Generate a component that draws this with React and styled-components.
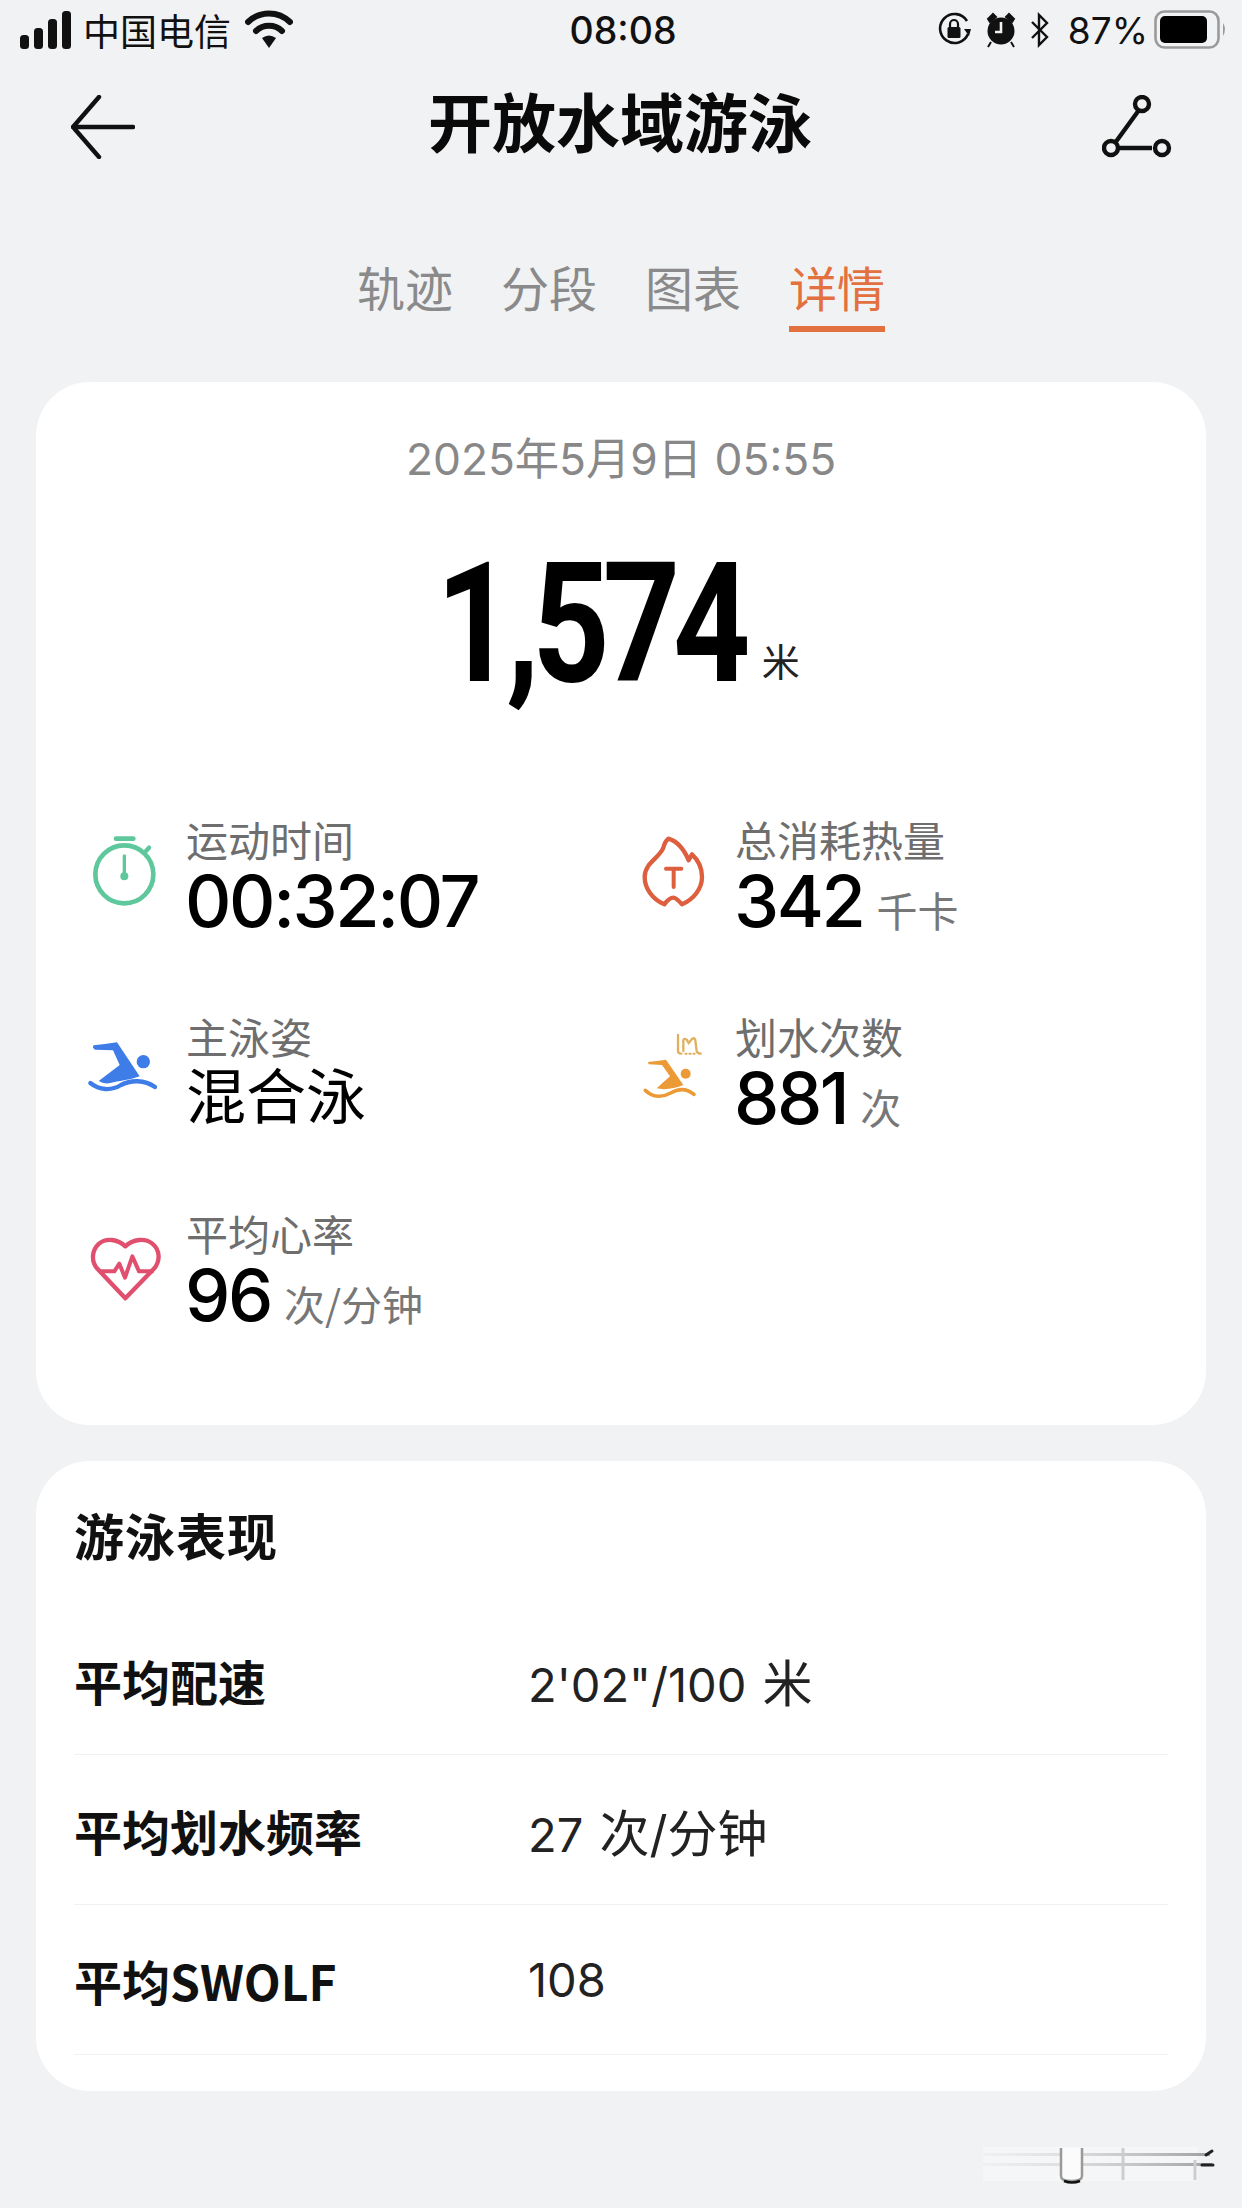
import React from 'react';
import styled, { createGlobalStyle } from 'styled-components';

const CJK = '"Noto Sans CJK SC", "Noto Sans", sans-serif';
const NUM = 'Inter, "Noto Sans CJK SC", sans-serif';

const Global = createGlobalStyle`
  html, body { margin: 0; padding: 0; background: #f1f2f4; }
  body { font-family: ${CJK}; color: #000; }
`;

const Page = styled.div`
  position: relative;
  width: 1242px;
  height: 2208px;
  overflow: hidden;
  background: #f1f2f4;
`;

const StatusBar = styled.div`
  display: grid;
  grid-template-columns: 1fr auto 1fr;
  align-items: center;
  height: 60px;
  padding: 0 14px 0 20px;
  box-sizing: border-box;
`;
const StatusLeft = styled.div`
  display: flex;
  align-items: center;
  gap: 12px;
`;
const StatusRight = styled.div`
  display: flex;
  align-items: center;
  justify-content: flex-end;
  gap: 14px;
`;
const Carrier = styled.span`
  font-size: 37px;
  line-height: 60px;
  color: #111;
  margin: 0 2px 0 -1px;
`;
const Clock = styled.span`
  font-family: ${NUM};
  font-size: 37.5px;
  font-weight: 500;
  color: #111;
  margin-left: -2px;
`;
const Battery = styled.span`
  font-family: ${NUM};
  font-size: 37px;
  color: #111;
  margin: 0 -8px 0 4px;
`;

const Header = styled.div`
  display: flex;
  align-items: center;
  justify-content: space-between;
  height: 124px;
  padding: 0 70px 0 71px;
`;
const HeaderIcon = styled.svg`
  margin-top: 10px;
  flex: none;
`;
const Title = styled.h1`
  margin: -6px 0 0 3px;
  font-size: 64px;
  font-weight: 700;
  line-height: 124px;
  color: #0a0a0a;
`;

const Tabs = styled.div`
  display: flex;
  justify-content: center;
  gap: 48px;
  padding-top: 77px;
  margin-bottom: 50px;
`;
const Tab = styled.div`
  font-size: 48px;
  line-height: 50px;
  padding-bottom: 15px;
  color: ${p => (p.$active ? '#e3703f' : '#8a8a8a')};
  border-bottom: 6px solid ${p => (p.$active ? '#e3703f' : 'transparent')};
`;

const Card = styled.section`
  margin: 0 36px 36px 36px;
  background: #fff;
  border-radius: 54px;
`;
const SummaryCard = styled(Card)`
  height: 1043px;
  padding-top: 49px;
  box-sizing: border-box;
`;
const DateLine = styled.div`
  text-align: center;
  font-family: ${NUM};
  font-size: 44.3px;
  line-height: 56px;
  color: #888;
`;
const Hero = styled.div`
  display: flex;
  justify-content: center;
  align-items: baseline;
  gap: 14px;
  height: 304px;
  line-height: 274px;
`;
const HeroNumber = styled.span`
  display: inline-block;
  font-family: Roboto, sans-serif;
  font-weight: 700;
  font-size: 167px;
  letter-spacing: -9px;
  margin: 0 -32px 0 -42px;
  transform: scaleX(0.81);
  color: #000;
`;
const HeroUnit = styled.span`
  font-size: 38px;
  color: #222;
  transform: translateY(-5px);
`;

const StatGrid = styled.div`
  display: grid;
  grid-template-columns: 549px 1fr;
  grid-auto-rows: 197px;
  padding-left: 25px;
`;
const Stat = styled.div`
  display: flex;
  gap: 5px;
`;
const IconBox = styled.svg`
  width: 120px;
  height: 120px;
  flex: none;
`;
const StatText = styled.div`
  padding-top: 23px;
`;
const StatLabel = styled.div`
  font-size: 42px;
  line-height: 50px;
  margin-bottom: 3px;
  color: #6e6e6e;
`;
const StatValue = styled.div`
  display: flex;
  align-items: baseline;
  gap: 13px;
  line-height: 70px;
`;
const Big = styled.span`
  font-family: ${NUM};
  font-weight: 500;
  font-size: 72px;
  letter-spacing: -2.4px;
  margin: -1px 0 0 -1px;
  color: #000;
`;
const BigCjk = styled.span`
  font-size: 60px;
  font-weight: 400;
  color: #000;
  margin-top: -6px;
`;
const Unit = styled.span`
  font-size: 41px;
  color: #777;
`;

const PerfCard = styled(Card)`
  height: 630px;
  padding: 43px 38px 0 38px;
  box-sizing: border-box;
`;
const PerfTitle = styled.h2`
  margin: 0 0 41px;
  font-size: 50px;
  letter-spacing: 1px;
  font-weight: 700;
  line-height: 60px;
  color: #111;
`;
const PerfRow = styled.div`
  display: flex;
  align-items: center;
  height: 149px;
  border-bottom: 1px solid #f1f1f1;
`;
const PerfLabel = styled.div`
  width: 454px;
  font-size: 48px;
  font-weight: 700;
  color: #111;
`;
const PerfValue = styled.div`
  font-family: ${NUM};
  font-size: 47px;
  color: #222;
`;
const PerfUnit = styled.span`
  font-size: 50px;
  margin-left: 3px;
`;
const Watermark = styled.svg`
  position: absolute;
  left: 980px;
  top: 2140px;
  width: 240px;
  height: 50px;
`;

const Signal = () => (
  <svg width="52" height="38" viewBox="0 0 52 38">
    <rect x="0" y="24" width="9" height="14" rx="3.5" fill="#111" />
    <rect x="14" y="17" width="9" height="21" rx="3.5" fill="#111" />
    <rect x="28" y="8" width="9" height="30" rx="3.5" fill="#111" />
    <rect x="42" y="0" width="9" height="38" rx="3.5" fill="#111" />
  </svg>
);
const Wifi = () => (
  <svg width="48" height="40" viewBox="0 0 48 40">
    <path d="M3 12 A30 30 0 0 1 45 12" fill="none" stroke="#111" strokeWidth="6" strokeLinecap="round" />
    <path d="M11 21 A19 19 0 0 1 37 21" fill="none" stroke="#111" strokeWidth="6" strokeLinecap="round" />
    <path d="M17 28 Q24 23 31 28 L24 38 Z" fill="#111" />
  </svg>
);
const RotLock = () => (
  <svg width="34" height="36" viewBox="0 0 34 36">
    <path d="M30 22 A14.5 14.5 0 1 1 29 9" fill="none" stroke="#111" strokeWidth="2.6" />
    <path d="M33 17 L26 17 L31 24 Z" fill="#111" />
    <rect x="9.5" y="15" width="13" height="11" rx="1.5" fill="#111" />
    <path d="M12 15 V12 A4 4 0 0 1 20 12 V15" fill="none" stroke="#111" strokeWidth="2.2" />
  </svg>
);
const Alarm = () => (
  <svg width="30" height="36" viewBox="0 0 30 36">
    <circle cx="15" cy="19" r="13.5" fill="#111" />
    <path d="M2 7 L7 2 L10 5 L4 10 Z M28 7 L23 2 L20 5 L26 10 Z M5 30 L2 35 M25 30 L28 35" fill="#111" stroke="#111" strokeWidth="2" />
    <path d="M15 10 V20 H9" fill="none" stroke="#f1f2f4" strokeWidth="2.6" />
  </svg>
);
const Bluetooth = () => (
  <svg width="20" height="36" viewBox="0 0 20 36">
    <path d="M2 10 L17 25 L9 33 V3 L17 11 L2 26" fill="none" stroke="#111" strokeWidth="2.4" />
  </svg>
);
const BatteryIcon = () => (
  <svg width="74" height="40" viewBox="0 0 74 40">
    <rect x="1.5" y="1.5" width="63" height="36" rx="9" fill="none" stroke="#9a9a9a" strokeWidth="2.6" />
    <rect x="6" y="6" width="47" height="27" rx="5" fill="#000" />
    <path d="M69 13 Q73 19 69 26 Z" fill="#9a9a9a" />
  </svg>
);
const BackArrow = () => (
  <HeaderIcon width="64" height="64" viewBox="0 0 64 64">
    <path d="M28 2 L2 32 L28 62 M2 32 H62" fill="none" stroke="#111" strokeWidth="4.4" strokeLinecap="round" strokeLinejoin="round" />
  </HeaderIcon>
);
const RouteIcon = () => (
  <HeaderIcon width="70" height="64" viewBox="0 0 70 64">
    <path d="M37 15 L13 48 M17 53 H50" fill="none" stroke="#111" strokeWidth="4.4" />
    <circle cx="40" cy="9" r="7" fill="none" stroke="#111" strokeWidth="4.4" />
    <circle cx="9" cy="53" r="7" fill="none" stroke="#111" strokeWidth="4.4" />
    <circle cx="60" cy="53" r="7" fill="none" stroke="#111" strokeWidth="4.4" />
  </HeaderIcon>
);

const Stopwatch = () => (
  <IconBox viewBox="3 0 360 360">
    <circle cx="193" cy="250" r="87" fill="none" stroke="#5fc79c" strokeWidth="14" />
    <path d="M168 143 H220" stroke="#5fc79c" strokeWidth="14" strokeLinecap="round" />
    <path d="M253 185 L267 170" stroke="#5fc79c" strokeWidth="13" strokeLinecap="round" />
    <path d="M193 195 V255" stroke="#5fc79c" strokeWidth="10" strokeLinecap="round" />
    <circle cx="193" cy="256" r="12" fill="#5fc79c" />
  </IconBox>
);
const Flame = () => (
  <IconBox viewBox="0 -30 360 360">
    <path
      d="M175 113 C200 120 222 145 236 178 C240 170 243 165 246 160 C268 180 276 205 276 228 C276 262 252 295 216 310 C205 298 198 290 190 290 C180 290 172 298 163 310 C127 295 104 262 104 228 C104 185 150 170 160 140 C163 128 168 118 175 113 Z"
      fill="none" stroke="#dd5f3f" strokeWidth="13" strokeLinejoin="round"
    />
    <path d="M168 203 H214 M191 203 V258" fill="none" stroke="#dd5f3f" strokeWidth="12" strokeLinecap="round" />
  </IconBox>
);
const Swim = () => (
  <IconBox viewBox="0 -39 360 360">
    <path d="M98 133 Q130 130 168 124 L236 226 C205 238 172 240 148 246 Q128 250 113 240 L176 192 L156 148 L102 146 Q92 140 98 133 Z" fill="#3e7de8" />
    <circle cx="247" cy="182" r="20" fill="#3e7de8" />
    <path d="M88 246 C115 268 150 270 180 252 C210 236 250 236 282 258" fill="none" stroke="#3e7de8" strokeWidth="13" strokeLinecap="round" />
  </IconBox>
);
const Strokes = () => (
  <IconBox viewBox="-30 -39 360 360">
    <path d="M84 183 Q110 180 138 176 L190 252 C165 262 135 268 110 262 L150 226 L126 192 L86 190 Z" fill="#ec9a35" />
    <circle cx="197" cy="218" r="15" fill="#ec9a35" />
    <path d="M76 268 C100 292 130 288 152 276 C175 262 200 262 222 280" fill="none" stroke="#ec9a35" strokeWidth="11" strokeLinecap="round" />
    <path d="M174 102 V150 Q174 158 184 158 M190 150 V118 Q192 110 200 116 L206 126 L216 114 Q224 108 226 118 L230 150 Q232 158 242 158" fill="none" stroke="#e0b060" strokeWidth="7" strokeLinecap="round" />
    <path d="M196 158 H200 M208 158 H212 M220 158 H224" stroke="#e0b060" strokeWidth="6" strokeLinecap="round" />
  </IconBox>
);
const Heart = () => (
  <IconBox viewBox="-30 -78 360 360">
    <path
      d="M163 262 L78 172 C60 150 62 118 84 98 C106 80 140 84 163 106 C186 84 222 80 244 98 C268 118 268 150 250 172 Z"
      fill="none" stroke="#e0506e" strokeWidth="13" strokeLinejoin="round"
    />
    <path d="M84 181 H130 L145 158 L162 200 L184 136 L204 181 H248" fill="none" stroke="#e0506e" strokeWidth="12" strokeLinejoin="round" />
  </IconBox>
);

const tabs = ['轨迹', '分段', '图表', '详情'];
const perf = [
  ['平均配速', '2\'02"/100', '米'],
  ['平均划水频率', '27', '次/分钟'],
  ['平均SWOLF', '108', ''],
];

export default function App() {
  return (
    <Page>
      <Global />
      <StatusBar>
        <StatusLeft>
          <Signal />
          <Carrier>中国电信</Carrier>
          <Wifi />
        </StatusLeft>
        <Clock>08:08</Clock>
        <StatusRight>
          <RotLock />
          <Alarm />
          <Bluetooth />
          <Battery>87%</Battery>
          <BatteryIcon />
        </StatusRight>
      </StatusBar>
      <Header>
        <BackArrow />
        <Title>开放水域游泳</Title>
        <RouteIcon />
      </Header>
      <Tabs>
        {tabs.map((t, i) => (
          <Tab key={t} $active={i === 3}>{t}</Tab>
        ))}
      </Tabs>
      <SummaryCard>
        <DateLine>2025年5月9日 05:55</DateLine>
        <Hero>
          <HeroNumber>1,574</HeroNumber>
          <HeroUnit>米</HeroUnit>
        </Hero>
        <StatGrid>
          <Stat>
            <Stopwatch />
            <StatText>
              <StatLabel>运动时间</StatLabel>
              <StatValue><Big>00:32:07</Big></StatValue>
            </StatText>
          </Stat>
          <Stat>
            <Flame />
            <StatText>
              <StatLabel>总消耗热量</StatLabel>
              <StatValue><Big>342</Big><Unit>千卡</Unit></StatValue>
            </StatText>
          </Stat>
          <Stat>
            <Swim />
            <StatText>
              <StatLabel>主泳姿</StatLabel>
              <StatValue><BigCjk>混合泳</BigCjk></StatValue>
            </StatText>
          </Stat>
          <Stat>
            <Strokes />
            <StatText>
              <StatLabel>划水次数</StatLabel>
              <StatValue><Big>881</Big><Unit>次</Unit></StatValue>
            </StatText>
          </Stat>
          <Stat>
            <Heart />
            <StatText>
              <StatLabel>平均心率</StatLabel>
              <StatValue><Big>96</Big><Unit>次/分钟</Unit></StatValue>
            </StatText>
          </Stat>
        </StatGrid>
      </SummaryCard>
      <PerfCard>
        <PerfTitle>游泳表现</PerfTitle>
        {perf.map(([k, v, u]) => (
          <PerfRow key={k}>
            <PerfLabel>{k}</PerfLabel>
            <PerfValue>{v} {u && <PerfUnit>{u}</PerfUnit>}</PerfValue>
          </PerfRow>
        ))}
      </PerfCard>
      <Watermark viewBox="0 0 240 50">
        <defs>
          <linearGradient id="fade" x1="0" x2="1" y1="0" y2="0">
            <stop offset="0" stopColor="#d8d9db" stopOpacity="0.2" />
            <stop offset="1" stopColor="#a0a0a0" />
          </linearGradient>
        </defs>
        <rect x="3" y="7" width="215" height="34" fill="#fff" opacity="0.3" />
        <rect x="3" y="13" width="227" height="3" fill="url(#fade)" />
        <rect x="3" y="23" width="229" height="3" fill="url(#fade)" />
        <path d="M226 15 L232 11 M222 25 H233" stroke="#222" strokeWidth="3" strokeLinecap="round" />
        <path d="M81 8 V36 Q81 41 91 41 Q102 41 102 36 V8" fill="#fbfbfb" stroke="#999" strokeWidth="2.5" />
        <path d="M84 41 Q92 44 100 41" fill="none" stroke="#111" strokeWidth="2.5" />
        <path d="M143 8 V40 M215 20 V40" stroke="#cdcdcd" strokeWidth="3" />
      </Watermark>
    </Page>
  );
}
